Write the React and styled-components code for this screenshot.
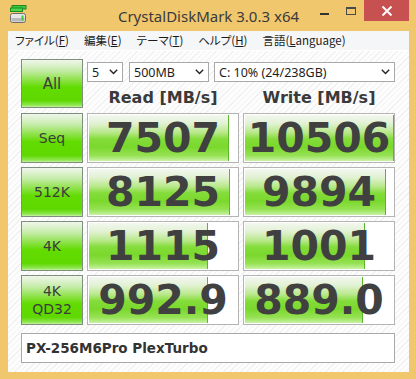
import React from "react";
import styled, { createGlobalStyle } from "styled-components";

const GlobalStyle = createGlobalStyle`
  html, body {
    margin: 0;
    padding: 0;
    background: #f0c76d;
  }
  * {
    box-sizing: border-box;
  }
`;

const results = [
  { label: ["Seq"], read: "7507", readBar: 0.933, write: "10506", writeBar: 0.995 },
  { label: ["512K"], read: "8125", readBar: 0.94, write: "9894", writeBar: 0.94 },
  { label: ["4K"], read: "1115", readBar: 0.793, write: "1001", writeBar: 0.8 },
  { label: ["4K", "QD32"], read: "992.9", readBar: 0.793, write: "889.0", writeBar: 0.787 },
];

const menus = [
  { text: "ファイル", key: "F" },
  { text: "編集", key: "E" },
  { text: "テーマ", key: "T" },
  { text: "ヘルプ", key: "H" },
  { text: "言語", key: "L", rest: "anguage" },
];

const AppIcon = () => (
  <svg width="18" height="20" viewBox="0 0 18 20">
    <rect x="2" y="0.5" width="14" height="3.5" fill="#3cc83c" stroke="#1f8a1f" strokeWidth="1" />
    <rect x="0.5" y="3" width="12" height="3.5" fill="#4cd64c" stroke="#1f8a1f" strokeWidth="1" />
    <rect x="0.5" y="8.5" width="15" height="9" rx="2" fill="#e6e6e6" stroke="#6d6d6d" strokeWidth="1" />
    <rect x="1.5" y="13" width="13" height="3.5" fill="#b9b9b9" />
    <rect x="11.5" y="10.5" width="2" height="5" fill="#3cc83c" />
  </svg>
);

const Chevron = () => (
  <svg width="9" height="6" viewBox="0 0 9 6">
    <polyline points="0.8,0.8 4.5,4.6 8.2,0.8" fill="none" stroke="#222" strokeWidth="1.4" />
  </svg>
);

export default function App() {
  return (
    <Window>
      <GlobalStyle />
      <TitleBar>
        <IconSlot>
          <AppIcon />
        </IconSlot>
        <Title>CrystalDiskMark 3.0.3 x64</Title>
        <Controls>
          <Minimize />
          <Maximize />
          <Close>
            <svg width="12" height="10" viewBox="0 0 12 10">
              <path d="M1.5 0.5 L10.5 9.5 M10.5 0.5 L1.5 9.5" stroke="#fff" strokeWidth="2" />
            </svg>
          </Close>
        </Controls>
      </TitleBar>
      <MenuBar>
        {menus.map((m) => (
          <MenuItem key={m.key}>
            {m.text}(<u>{m.key}</u>
            {m.rest || ""})
          </MenuItem>
        ))}
      </MenuBar>
      <Client>
        <Grid>
          <TestButton>All</TestButton>
          <TopArea>
            <Selects>
              <Select $w={36}>
                <span>5</span>
                <Chevron />
              </Select>
              <Select $w={80}>
                <span>500MB</span>
                <Chevron />
              </Select>
              <Select $w={181}>
                <span>C: 10% (24/238GB)</span>
                <Chevron />
              </Select>
            </Selects>
            <Headers>
              <Header>Read [MB/s]</Header>
              <Header>Write [MB/s]</Header>
            </Headers>
          </TopArea>
          {results.map((r) => (
            <React.Fragment key={r.label.join()}>
              <TestButton $small>
                {r.label.map((l) => (
                  <span key={l}>{l}</span>
                ))}
              </TestButton>
              <Cell>
                <Bar style={{ width: `${r.readBar * 100}%` }} />
                <Value>{r.read}</Value>
              </Cell>
              <Cell>
                <Bar style={{ width: `${r.writeBar * 100}%` }} />
                <Value>{r.write}</Value>
              </Cell>
            </React.Fragment>
          ))}
        </Grid>
        <NameBox>PX-256M6Pro PlexTurbo</NameBox>
      </Client>
    </Window>
  );
}

const Window = styled.div`
  width: 416px;
  height: 379px;
  background: #f0c76d;
  padding: 0 7px 7px 8px;
  display: flex;
  flex-direction: column;
`;

const TitleBar = styled.div`
  height: 31px;
  display: grid;
  grid-template-columns: 1fr auto 1fr;
  align-items: start;
`;

const IconSlot = styled.div`
  padding: 5px 0 0 2px;
  display: flex;
`;

const Title = styled.div`
  font-family: "Noto Sans", "Open Sans", sans-serif;
  font-size: 15px;
  color: #3a3a3a;
  line-height: 31px;
  padding-top: 1px;
`;

const Controls = styled.div`
  display: flex;
  justify-content: flex-end;
  align-items: flex-start;
`;

const Minimize = styled.div`
  width: 9px;
  height: 2px;
  background: #333;
  margin: 13px 17px 0 0;
`;

const Maximize = styled.div`
  width: 10px;
  height: 8px;
  border: 1px solid #4a4a4a;
  border-top-width: 2px;
  margin: 7px 8px 0 0;
`;

const Close = styled.div`
  width: 45px;
  height: 21px;
  background: #c75050;
  display: flex;
  align-items: center;
  justify-content: center;
`;

const MenuBar = styled.div`
  height: 19px;
  background: #f5f6f7;
  display: flex;
  align-items: center;
  padding-left: 7px;
  gap: 15px;
`;

const MenuItem = styled.div`
  font-family: "Noto Sans CJK JP", sans-serif;
  font-feature-settings: "palt";
  font-size: 11.5px;
  color: #1a1a1a;
  line-height: 19px;
  white-space: nowrap;

  u {
    text-decoration-thickness: 1px;
    text-underline-offset: 1px;
  }
`;

const Client = styled.div`
  flex: 1;
  background: repeating-linear-gradient(135deg, #fdfdfd 0 3px, #f1f1f1 3px 4px);
  border-top: 1px solid #fff;
  padding: 8px 14px 9px 13px;
  display: flex;
  flex-direction: column;
`;

const Grid = styled.div`
  display: grid;
  grid-template-columns: 62px 152px 152px;
  grid-auto-rows: 50px;
  gap: 4px;
`;

const TestButton = styled.div`
  border: 1px solid #7e8f7e;
  background: linear-gradient(
    to bottom,
    #f0f6ec 0%,
    #c6ecaa 22%,
    #8ee24a 42%,
    #62dc00 58%,
    #5ed800 86%,
    #8fe650 96%,
    #c4f2a0 100%
  );
  display: flex;
  flex-direction: column;
  align-items: center;
  justify-content: center;
  font-family: "DejaVu Sans", Verdana, sans-serif;
  font-size: ${({ $small }) => ($small ? "14px" : "15px")};
  line-height: 18px;
  color: #3c3c3c;
  ${({ $small }) => ($small ? "" : "height: 49px;")}
`;

const TopArea = styled.div`
  grid-column: 2 / span 2;
  display: flex;
  flex-direction: column;
`;

const Selects = styled.div`
  margin-top: 3px;
  height: 20px;
  display: flex;
  gap: 6px;

  & > :last-child {
    margin-left: -1px;
  }
`;

const Select = styled.div`
  width: ${({ $w }) => $w}px;
  height: 20px;
  background: #fff;
  border: 1px solid #a9a9a9;
  display: flex;
  align-items: center;
  justify-content: space-between;
  padding: 0 4px 0 4px;
  font-family: "Noto Sans", sans-serif;
  font-size: 12.5px;
  color: #1e1e1e;
`;

const Headers = styled.div`
  flex: 1;
  display: grid;
  grid-template-columns: 152px 152px;
  gap: 4px;
  align-items: center;
`;

const Header = styled.div`
  text-align: center;
  font-family: "DejaVu Sans", Verdana, sans-serif;
  font-weight: bold;
  font-size: 16px;
  color: #3a3a3a;
  padding-top: 3px;
`;

const Cell = styled.div`
  position: relative;
  background: #fff;
  border: 1px solid #b4b4b4;
  padding: 1px;
  display: flex;
  align-items: center;
  justify-content: center;
`;

const Bar = styled.div`
  position: absolute;
  left: 1px;
  top: 1px;
  bottom: 1px;
  border-right: 1px solid #5cb52a;
  background: linear-gradient(
    to bottom,
    #f3f7f0 0%,
    #e2f2d4 18%,
    #b8e88a 38%,
    #84dc3a 52%,
    #7ad82c 70%,
    #96e254 88%,
    #c8f2a4 100%
  );
`;

const Value = styled.div`
  position: relative;
  font-family: "DejaVu Sans", Verdana, sans-serif;
  font-weight: bold;
  font-size: 41px;
  line-height: 1;
  color: #404040;
`;

const NameBox = styled.div`
  margin-top: 8px;
  height: 30px;
  width: 374px;
  background: #fff;
  border: 1px solid #a9a9a9;
  display: flex;
  align-items: center;
  padding-left: 4px;
  font-family: "DejaVu Sans", Verdana, sans-serif;
  font-weight: bold;
  font-size: 13.5px;
  color: #333;
`;
